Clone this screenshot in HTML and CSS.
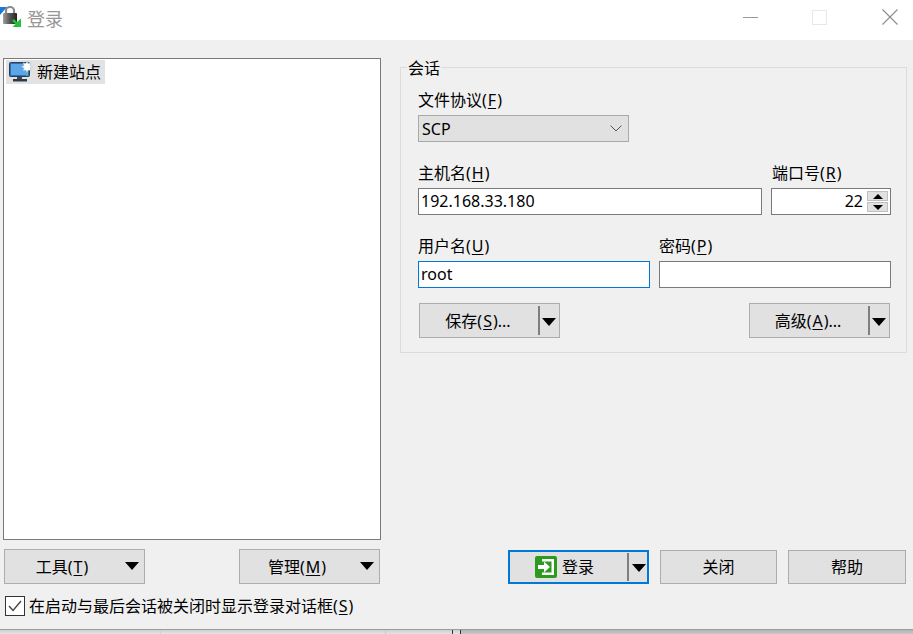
FILE: index.html
```html
<!DOCTYPE html>
<html lang="zh-CN">
<head>
<meta charset="utf-8">
<title>登录</title>
<link rel="stylesheet" href="styles.css">
</head>
<body>
<div class="window">
  <header class="titlebar">
    <svg class="app-icon" width="22" height="28" viewBox="0 0 22 28">
      <defs>
        <linearGradient id="lockBody" x1="0" y1="0" x2="1" y2="0">
          <stop offset="0" stop-color="#a0a0a0"/>
          <stop offset=".45" stop-color="#5a5a5a"/>
          <stop offset="1" stop-color="#222"/>
        </linearGradient>
      </defs>
      <path d="M6 13 V10.500 a4 3.500 0 0 1 8 0 V13" fill="none" stroke="#8a8a8a" stroke-width="2.200"/>
      <rect x="3" y="13" width="14" height="11" rx="1" fill="url(#lockBody)"/>
      <path d="M0 7 H7 L0 15 Z" fill="#1c78d8"/>
      <path d="M12 21 L14 19 L17 22 L21 18.500 V27 H12.500 L15.500 24 Z" fill="#23c03a"/>
    </svg>
    <span class="title">登录</span>
    <div class="win-controls">
      <span class="win-min"></span>
      <span class="win-max"></span>
      <svg class="win-close" width="16" height="16" viewBox="0 0 16 16"><path d="M.5 .5 L15.500 15.500 M15.500 .5 L.5 15.500" stroke="#8c8c8c" stroke-width="1.100" fill="none"/></svg>
    </div>
  </header>

  <main class="content">
    <section class="left">
      <div class="tree">
        <div class="tree-item">
          <svg class="tree-icon" width="24" height="22" viewBox="0 0 24 22">
            <rect x="0.5" y="1.500" width="20" height="14" rx="1" fill="#2f6fb5" stroke="#2a3f55"/>
            <rect x="2" y="3" width="17" height="11" fill="#5aa6e6"/>
            <rect x="17" y="14" width="2" height="1" fill="#46c04a"/>
            <rect x="8" y="16" width="5" height="2" fill="#3c4a57"/>
            <rect x="4" y="18" width="14" height="2.500" fill="#2d3a46"/>
            <path d="M18 0 l1.200 2.600 2.800 -.8 -1 2.800 2.600 1.200 -2.600 1.200 1 2.800 -2.800 -.8 -1.200 2.600 -1.200 -2.600 -2.800 .8 1 -2.800 -2.600 -1.200 2.600 -1.200 -1 -2.800 2.800 .8 z" fill="#fff" stroke="#9db4c8" stroke-width=".5"/>
          </svg>
          <span>新建站点</span>
        </div>
      </div>
      <div class="left-buttons">
        <button class="btn btn-tool"><span class="btn-label">工具(<u>T</u>)</span><i class="arrow"></i></button>
        <button class="btn btn-tool"><span class="btn-label">管理(<u>M</u>)</span><i class="arrow"></i></button>
      </div>
    </section>

    <section class="right">
      <div class="group">
        <span class="legend">会话</span>
        <label class="field field-protocol">
          <span class="field-label">文件协议(<u>F</u>)</span>
          <div class="combo"><span>SCP</span>
            <svg width="12" height="7" viewBox="0 0 12 7"><path d="M.5 .5 L6 6 L11.500 .5" fill="none" stroke="#555" stroke-width="1"/></svg>
          </div>
        </label>
        <div class="row row-host">
          <label class="field field-host">
            <span class="field-label">主机名(<u>H</u>)</span>
            <div class="input">192.168.33.180</div>
          </label>
          <label class="field field-port">
            <span class="field-label">端口号(<u>R</u>)</span>
            <div class="input input-port">
              <span>22</span>
              <div class="spinner">
                <span class="spin"><i class="tri-up"></i></span>
                <span class="spin"><i class="tri-down"></i></span>
              </div>
            </div>
          </label>
        </div>
        <div class="row row-user">
          <label class="field field-half">
            <span class="field-label">用户名(<u>U</u>)</span>
            <div class="input input-focus">root</div>
          </label>
          <label class="field field-half">
            <span class="field-label">密码(<u>P</u>)</span>
            <div class="input"></div>
          </label>
        </div>
        <div class="row row-actions">
          <button class="btn btn-split"><span class="btn-label">保存(<u>S</u>)...</span><i class="sep"></i><i class="arrow"></i></button>
          <button class="btn btn-split"><span class="btn-label">高级(<u>A</u>)...</span><i class="sep"></i><i class="arrow"></i></button>
        </div>
      </div>
      <div class="right-buttons">
        <button class="btn btn-login">
          <span class="btn-label"><svg width="22" height="22" viewBox="0 0 22 22">
              <rect width="22" height="22" rx="2" fill="#2b9a1e"/>
              <path d="M7 3 H19 V19 H7 V16.500 H16.500 V5.500 H7 Z" fill="#fff"/>
              <path d="M3 9 H9 V5.500 L15 11 L9 16.500 V13 H3 Z" fill="#fff"/>
            </svg><span>登录</span></span><i class="sep"></i><i class="arrow"></i>
        </button>
        <button class="btn btn-plain">关闭</button>
        <button class="btn btn-plain btn-help">帮助</button>
      </div>
    </section>
  </main>

  <div class="check-row">
    <span class="checkbox">
      <svg width="14" height="12" viewBox="0 0 14 12"><path d="M1 6 L5 10.500 L13 1" fill="none" stroke="#444" stroke-width="1.400"/></svg>
    </span>
    <span>在启动与最后会话被关闭时显示登录对话框(<u>S</u>)</span>
  </div>
</div>
<footer class="strip">
  <i class="seg seg-a"></i><i class="seg seg-b"></i><i class="seg seg-c"></i><i class="seg seg-d"></i><i class="seg seg-e"></i>
</footer>
</body>
</html>
```
FILE: styles.css
```css
* { box-sizing: border-box; }
html, body { margin: 0; padding: 0; }
body {
  width: 913px;
  height: 634px;
  overflow: hidden;
  background: #f0f0f0;
  color: #000;
  font: 16px/20px "Noto Sans", "Noto Sans CJK SC", sans-serif;
  display: flex;
  flex-direction: column;
}
u { margin: 0 1px; text-underline-offset: 2px; text-decoration-thickness: 1px; }
i { display: block; }

.window { height: 629px; display: flex; flex-direction: column; }

.titlebar {
  height: 40px;
  background: #fff;
  display: flex;
  align-items: flex-start;
}
.app-icon { flex: none; }
.title { margin: 8px 0 0 5px; color: #979797; font-size: 18px; line-height: 22px; }
.win-controls { margin-left: auto; display: flex; align-items: center; height: 34px; }
.win-min { width: 15px; height: 1px; background: #999; margin-right: 54px; }
.win-max { width: 15px; height: 15px; border: 1px solid #e8e8e8; margin-right: 55px; }
.win-close { margin-right: 15px; }

.content {
  height: 544px;
  display: flex;
  padding: 18px 0 0 3px;
}
.left { width: 378px; display: flex; flex-direction: column; }
.tree {
  height: 482px;
  background: #fff;
  border: 1px solid #7a7a7a;
  padding: 1px 2px;
}
.tree-item {
  width: 99px;
  height: 24px;
  background: #e2e2e2;
  display: flex;
  align-items: center;
  gap: 4px;
  padding-left: 3px;
}
.tree-icon { flex: none; }
.left-buttons {
  display: flex;
  justify-content: space-between;
  margin: 9px 1px 0;
}

.btn {
  display: flex;
  flex: none;
  align-items: center;
  height: 35px;
  padding: 0;
  background: #e1e1e1;
  border: 1px solid #adadad;
  font: inherit;
  color: inherit;
}
.btn-label { display: flex; flex: 1; align-items: center; justify-content: center; white-space: pre; }
.arrow {
  width: 0;
  height: 0;
  border-style: solid;
  border-width: 8px 7.5px 0;
  border-color: #000 transparent transparent;
}
.sep { width: 2px; height: 29px; background: #7f7f7f; }

.btn-tool { width: 141px; }
.btn-tool .btn-label { padding: 0 14px 0 8px; }
.btn-tool .arrow { margin: 0 5px 1px 0; }

.right { margin-left: 19px; width: 507px; display: flex; flex-direction: column; }
.group {
  position: relative;
  height: 286px;
  margin-top: 9px;
  border: 1px solid #dcdcdc;
  padding: 21px 15px 0 17px;
}
.legend {
  position: absolute;
  left: 6px;
  top: -9px;
  background: #f0f0f0;
  padding: 0 1px;
  line-height: 18px;
}
.field { display: flex; flex-direction: column; gap: 4px; }
.field-label { display: block; line-height: 22px; height: 22px; }
.field-protocol { width: 211px; }
.combo {
  height: 27px;
  background: #e1e1e1;
  border: 1px solid #a9a9a9;
  display: flex;
  align-items: center;
  justify-content: space-between;
  padding: 0 6px 0 3px;
}
.row { display: flex; }
.row-host { margin-top: 20px; gap: 9px; }
.field-host { width: 344px; }
.field-port { width: 120px; }
.field-port .field-label { padding-left: 1px; }
.input {
  height: 27px;
  background: #fff;
  border: 1px solid #7a7a7a;
  padding: 0 2px;
  line-height: 25px;
}
.input-port { display: flex; justify-content: flex-end; gap: 4px; padding-right: 2px; }
.spinner { display: flex; flex-direction: column; gap: 1px; padding-top: 2px; }
.spin {
  width: 21px;
  height: 10px;
  background: #e1e1e1;
  border: 1px solid #c0c0c0;
  display: flex;
  align-items: center;
  justify-content: center;
}
.tri-up { width: 0; height: 0; border-style: solid; border-width: 0 5px 5px; border-color: transparent transparent #000; }
.tri-down { width: 0; height: 0; border-style: solid; border-width: 5px 5px 0; border-color: #000 transparent transparent; }

.row-user { margin-top: 20px; gap: 9px; }
.field-half { width: 232px; }
.input-focus { border-color: #0078d7; }

.row-actions { margin-top: 15px; padding: 0 1px; justify-content: space-between; }
.btn-split { width: 141px; }
.btn-split .btn-label { padding-right: 3px; }
.btn-split .sep { margin-left: -1px; }
.btn-split .arrow { margin: 2px 3px 0 2px; }

.right-buttons {
  display: flex;
  margin: 197px 0 0 108px;
  gap: 11px;
}
.btn-login { width: 141px; height: 34px; border: 2px solid #0078d7; }
.btn-login .btn-label { gap: 5px; padding-right: 8px; }
.btn-login .sep { height: 28px; }
.btn-login .arrow { margin: 2px 1px 0 3px; }
.btn-plain { width: 117px; height: 34px; justify-content: center; }
.btn-help { width: 118px; }

.check-row {
  display: flex;
  align-items: center;
  gap: 4px;
  margin: 12px 0 0 5px;
  height: 20px;
}
.checkbox {
  width: 20px;
  height: 20px;
  background: #fff;
  border: 1px solid #333;
  display: flex;
  align-items: center;
  justify-content: center;
}

.strip {
  height: 5px;
  border-top: 1px solid #9c9c9c;
  display: flex;
}
.seg { height: 100%; background: linear-gradient(#d0d0d0, #e4e4e4); }
.seg-a { width: 161px; border-right: 1px solid #cfcfcf; }
.seg-b { width: 225px; border-right: 1px solid #c8c8c8; }
.seg-c { width: 67px; border-right: 1px solid #333; }
.seg-d { width: 8px; border-right: 1px solid #333; }
.seg-e { flex: 1; background: linear-gradient(#b4b4b4, #c8c8c8); }
```
